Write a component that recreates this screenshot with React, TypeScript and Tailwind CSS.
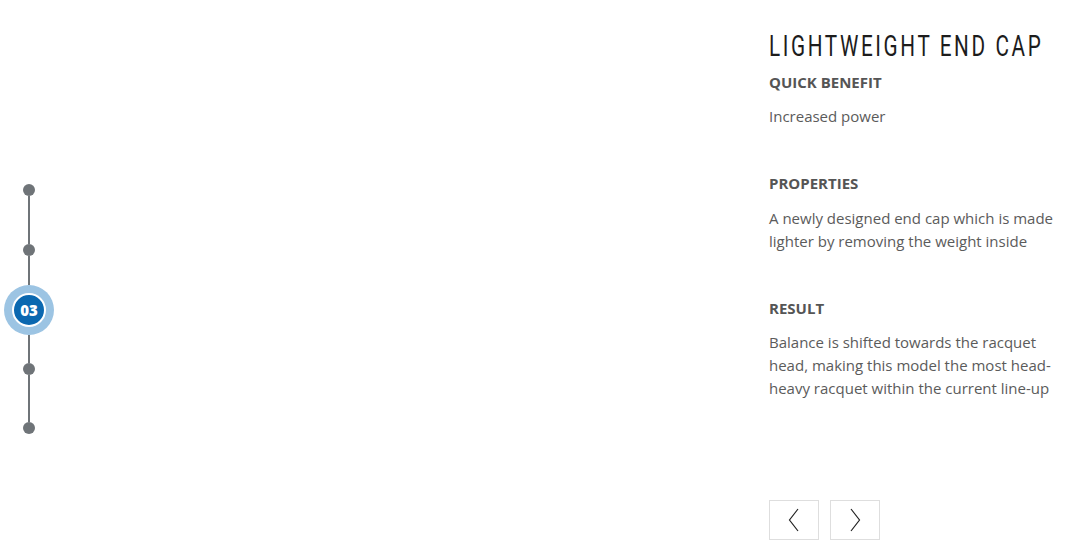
import React from "react";

const body = { fontFamily: '"Open Sans", "Liberation Sans", sans-serif' };

function Dot() {
  return <div className="w-[12px] h-[12px] rounded-full bg-[#6f7478] shrink-0" />;
}

export default function App() {
  return (
    <div className="w-[1069px] h-[548px] bg-white flex overflow-hidden" style={body}>
      <div className="w-[58px] shrink-0 flex flex-col items-center pt-[184px]">
        <Dot />
        <div className="w-[2px] h-[48px] bg-[#6f7478]" />
        <Dot />
        <div className="w-[2px] h-[29px] bg-[#6f7478]" />
        <div className="w-[50px] h-[50px] rounded-full bg-[#9cc4e3] flex items-center justify-center shrink-0">
          <div className="w-[34px] h-[34px] rounded-full bg-[#0b68b0] border-2 border-white flex items-center justify-center text-white text-[15px] font-extrabold leading-none">
            03
          </div>
        </div>
        <div className="w-[2px] h-[28px] bg-[#6f7478]" />
        <Dot />
        <div className="w-[2px] h-[47px] bg-[#6f7478]" />
        <Dot />
      </div>
      <div className="flex-1" />
      <div className="w-[300px] shrink-0 flex flex-col pt-[30px]">
        <h1
          className="text-[30px] leading-[32px] font-normal text-[#1c1c1c] tracking-[3.8px] whitespace-nowrap origin-left scale-x-[0.69]"
          style={{ fontFamily: 'Roboto, "Liberation Sans", sans-serif' }}
        >
          LIGHTWEIGHT END CAP
        </h1>
        <h2 className="mt-[10px] text-[15px] leading-[20px] font-bold text-[#555]">QUICK BENEFIT</h2>
        <p className="mt-[13px] text-[15px] leading-[23px] text-[#5b5b5b]">Increased power</p>
        <h2 className="mt-[45px] text-[15px] leading-[20px] font-bold text-[#555]">PROPERTIES</h2>
        <p className="mt-[14px] text-[15px] leading-[23px] text-[#5b5b5b]">
          A newly designed end cap which is made lighter by removing the weight inside
        </p>
        <h2 className="mt-[45px] text-[15px] leading-[20px] font-bold text-[#555]">RESULT</h2>
        <p className="mt-[13px] text-[15px] leading-[23px] text-[#5b5b5b]">
          Balance is shifted towards the racquet head, making this model the most head-heavy racquet within the current line-up
        </p>
        <div className="mt-auto mb-[8px] flex gap-[11px]">
          <button className="w-[50px] h-[40px] border border-[#dedede] flex items-center justify-center">
            <svg width="12" height="24" viewBox="0 0 12 24" fill="none" stroke="#222" strokeWidth="1.2">
              <path d="M10 1 L1.5 12 L10 23" />
            </svg>
          </button>
          <button className="w-[50px] h-[40px] border border-[#dedede] flex items-center justify-center">
            <svg width="12" height="24" viewBox="0 0 12 24" fill="none" stroke="#222" strokeWidth="1.2">
              <path d="M2 1 L10.5 12 L2 23" />
            </svg>
          </button>
        </div>
      </div>
    </div>
  );
}
